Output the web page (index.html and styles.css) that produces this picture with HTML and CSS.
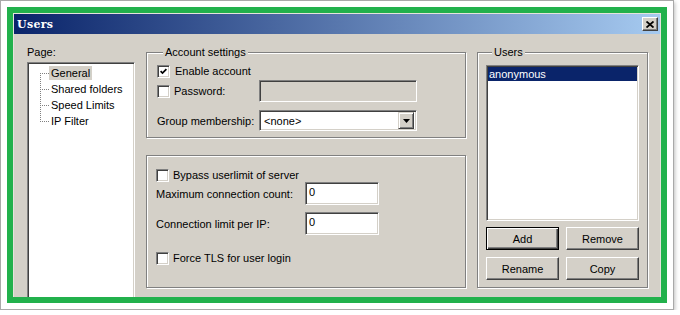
FILE: index.html
```html
<!DOCTYPE html>
<html lang="en">
<head>
  <meta charset="UTF-8" />
  <title>Users</title>
  <link rel="stylesheet" href="styles.css">
</head>
<body>
  <div class="frame">
    <div class="marker">
      <div class="window">
        <div class="titlebar">
          <span class="title">Users</span>
          <span class="close">
            <svg width="8" height="7" viewBox="0 0 8 7"><path d="M0.5 0.5L7.5 6.5M7.5 0.5L0.5 6.5" stroke="#000" stroke-width="1.8" fill="none"/></svg>
          </span>
        </div>

        <div class="dialog">
          <div class="pages">
            <div class="caption">Page:</div>
            <ul class="tree sunken">
              <li class="first"><span class="selected">General</span></li>
              <li><span>Shared folders</span></li>
              <li><span>Speed Limits</span></li>
              <li class="last"><span>IP Filter</span></li>
            </ul>
          </div>

          <div class="settings">
            <div class="group account">
              <div class="group-title">Account settings</div>
              <div class="row check-row">
                <span class="box"><svg width="7" height="7" viewBox="0 0 7 7"><path d="M0.6 3.2L2.5 5.1L6.4 1.2" stroke="#000" stroke-width="1.7" fill="none"/></svg></span>
                Enable account
              </div>
              <div class="row field-row pw">
                <span class="label-cell"><span class="box"></span>Password:</span>
                <span class="field sunken disabled"></span>
              </div>
              <div class="row field-row grp">
                <span class="label-cell">Group membership:</span>
                <span class="select sunken">
                  <span class="value">&lt;none&gt;</span>
                  <span class="drop"><svg width="7" height="4" viewBox="0 0 7 4"><path d="M0 0H7L3.5 4Z" fill="#000"/></svg></span>
                </span>
              </div>
            </div>

            <div class="group limits">
              <div class="row check-row bypass"><span class="box"></span>Bypass userlimit of server</div>
              <div class="row input-row">
                <span class="label-cell">Maximum connection count:</span>
                <span class="num sunken">0</span>
              </div>
              <div class="row input-row second">
                <span class="label-cell">Connection limit per IP:</span>
                <span class="num sunken">0</span>
              </div>
              <div class="row check-row tls"><span class="box"></span>Force TLS for user login</div>
            </div>
          </div>

          <div class="group users">
            <div class="group-title">Users</div>
            <div class="listbox sunken">
              <div class="list-item selected">anonymous</div>
            </div>
            <div class="buttons">
              <span class="btn default">Add</span>
              <span class="btn">Remove</span>
              <span class="btn">Rename</span>
              <span class="btn">Copy</span>
            </div>
          </div>
        </div>
      </div>
    </div>
  </div>
</body>
</html>
```

FILE: styles.css
```css
body {
  margin: 0;
  background-color: #fff;
  font-family: 'Liberation Sans', Arial, sans-serif;
  font-size: 11px;
  color: #000;
}

.frame {
  width: 674px;
  height: 310px;
  box-sizing: border-box;
  border: 1px solid #a9a9a9;
  padding: 6px;
  background-color: #fff;
  box-shadow: 1px 2px 4px rgba(0, 0, 0, 0.25);
}

.marker {
  border: 6px solid #22b14c;
}

.window {
  width: 648px;
  height: 284px;
  box-sizing: border-box;
  border: 1px solid #e6e3dc;
  border-bottom: 0;
  background-color: #d4d0c8;
  display: flex;
  flex-direction: column;
  overflow: hidden;
}

.titlebar {
  height: 20px;
  flex: none;
  display: flex;
  align-items: center;
  justify-content: space-between;
  padding: 0 2px 0 3px;
  background: linear-gradient(to right, #0a246a, #a6caf0);
}

.title {
  color: #fff;
  font-family: 'DejaVu Serif', 'Liberation Serif', serif;
  font-weight: bold;
  font-size: 11px;
  letter-spacing: 0.3px;
}

.close {
  width: 16px;
  height: 14px;
  box-sizing: border-box;
  display: flex;
  align-items: center;
  justify-content: center;
  background-color: #d4d0c8;
  border: 1px solid;
  border-color: #fff #404040 #404040 #fff;
  box-shadow: inset -1px -1px #808080;
}

.dialog {
  flex: 1;
  min-height: 0;
  display: flex;
  gap: 11px;
  padding: 12px 12px 9px 13px;
}

.sunken {
  box-sizing: border-box;
  border: 1px solid;
  border-color: #808080 #fff #fff #808080;
  box-shadow: inset 1px 1px #404040, inset -1px -1px #d4d0c8;
  background-color: #fff;
}

/* page tree */

.pages {
  width: 108px;
  flex: none;
}

.caption {
  line-height: 13px;
}

.tree {
  list-style: none;
  margin: 3px 0 0;
  padding: 2px 0 0;
  height: 240px;
}

.tree li {
  display: flex;
  align-items: center;
  height: 16px;
}

.tree li::before {
  content: "";
  width: 9px;
  height: 16px;
  margin-left: 12px;
  background-image:
    repeating-linear-gradient(to right, #808080 0 1px, transparent 1px 2px),
    repeating-linear-gradient(to bottom, #808080 0 1px, transparent 1px 2px);
  background-repeat: no-repeat;
  background-size: 9px 1px, 1px 16px;
  background-position: 0 8px, 0 0;
}

.tree li.first::before {
  background-size: 9px 1px, 1px 8px;
  background-position: 0 8px, 0 8px;
}

.tree li.last::before {
  background-size: 9px 1px, 1px 9px;
  background-position: 0 8px, 0 0;
}

.tree li span {
  padding: 0 2px;
  line-height: 14px;
}

.tree li span.selected {
  background-color: #d4d0c8;
}

/* group boxes */

.settings {
  width: 320px;
  flex: none;
  display: flex;
  flex-direction: column;
  margin-top: 6px;
}

.group {
  box-sizing: border-box;
  border: 1px solid #808080;
  box-shadow: 1px 1px 0 #fff, inset 1px 1px 0 #fff;
}

.group-title {
  width: fit-content;
  margin: -7px 0 0 6px;
  padding: 0 2px;
  line-height: 13px;
  background-color: #d4d0c8;
}

.row {
  display: flex;
  align-items: center;
}

.label-cell {
  display: flex;
  align-items: center;
  flex: none;
}

.box {
  width: 13px;
  height: 13px;
  flex: none;
  box-sizing: border-box;
  display: flex;
  align-items: center;
  justify-content: center;
  margin-right: 4px;
  border: 1px solid;
  border-color: #808080 #fff #fff #808080;
  box-shadow: inset 1px 1px #404040, inset -1px -1px #d4d0c8;
  background-color: #fff;
}

.account {
  padding: 0 0 6px 10px;
}

.account .check-row {
  height: 14px;
  margin-top: 5px;
}

.account .check-row .box {
  margin-right: 5px;
}

.account .field-row {
  height: 22px;
}

.account .label-cell {
  width: 102px;
}

.account .pw {
  margin-top: 2px;
}

.account .grp {
  height: 21px;
  margin-top: 8px;
}

.field {
  width: 158px;
  height: 22px;
}

.field.disabled {
  background-color: #d4d0c8;
}

.select {
  width: 158px;
  height: 21px;
  display: flex;
  align-items: center;
  justify-content: space-between;
  padding: 2px;
}

.select .value {
  padding-left: 2px;
}

.drop {
  width: 16px;
  height: 17px;
  box-sizing: border-box;
  display: flex;
  align-items: center;
  justify-content: center;
  background-color: #d4d0c8;
  border: 1px solid;
  border-color: #d4d0c8 #404040 #404040 #d4d0c8;
  box-shadow: inset 1px 1px #fff, inset -1px -1px #808080;
}

.limits {
  flex: 1;
  margin-top: 17px;
  padding-left: 9px;
}

.limits .check-row {
  height: 14px;
}

.limits .bypass {
  margin-top: 12px;
}

.limits .tls {
  margin-top: 16px;
}

.input-row {
  height: 23px;
}

.input-row.second {
  margin-top: 7px;
}

.limits .label-cell {
  width: 149px;
}

.num {
  width: 74px;
  height: 23px;
  align-self: flex-start;
  padding: 3px 3px 0;
  line-height: 13px;
}

/* users list */

.users {
  width: 171px;
  flex: none;
  margin-top: 6px;
  display: flex;
  flex-direction: column;
  padding: 0 8px 7px;
}

.listbox {
  flex: 1;
  margin-top: 6px;
  padding: 1px;
}

.list-item {
  line-height: 14px;
  padding-left: 1px;
}

.list-item.selected {
  background-color: #0a246a;
  color: #fff;
}

.buttons {
  display: grid;
  grid-template-columns: 73px 73px;
  gap: 7px;
  margin-top: 6px;
}

.btn {
  height: 23px;
  box-sizing: border-box;
  display: flex;
  align-items: center;
  justify-content: center;
  background-color: #d4d0c8;
  border: 1px solid;
  border-color: #fff #404040 #404040 #fff;
  box-shadow: inset -1px -1px #808080;
}

.btn.default {
  border-color: #000;
  box-shadow: inset 1px 1px #fff, inset -1px -1px #404040, inset -2px -2px #808080;
}
```
